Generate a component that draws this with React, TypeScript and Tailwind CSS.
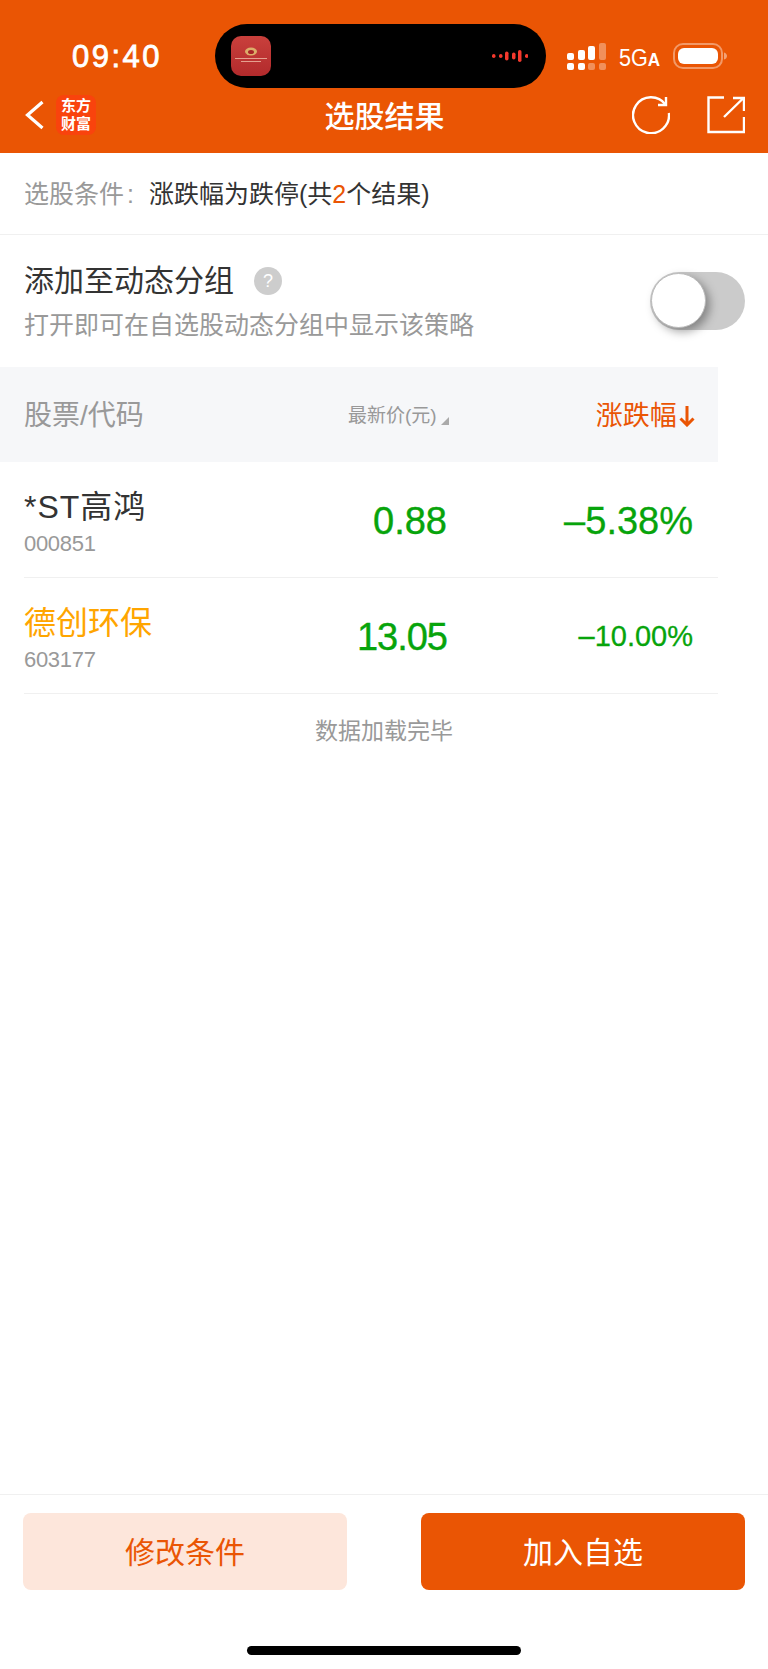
import React from "react";

const sans = "font-['Liberation_Sans','Noto_Sans_CJK_SC',sans-serif]";

function SignalIcon() {
  return (
    <svg width="40" height="28" viewBox="0 0 40 28" fill="#fff">
      <rect x="0" y="10" width="7" height="7" rx="2" />
      <rect x="0" y="20" width="7" height="7" rx="2" />
      <rect x="11" y="7" width="7" height="10" rx="2" />
      <rect x="11" y="20" width="7" height="7" rx="2" />
      <rect x="21" y="3" width="7" height="14" rx="2" />
      <rect x="21" y="20" width="7" height="7" rx="2" opacity="0.35" />
      <rect x="32" y="0" width="7" height="17" rx="2" opacity="0.35" />
      <rect x="32" y="20" width="7" height="7" rx="2" opacity="0.35" />
    </svg>
  );
}

function Battery() {
  return (
    <svg width="55" height="26" viewBox="0 0 55 26">
      <rect x="1" y="1" width="48" height="24" rx="9" fill="none" stroke="#fff" strokeOpacity="0.4" strokeWidth="2" />
      <rect x="5" y="5" width="40" height="16" rx="6" fill="#fff" />
      <path d="M51 9.500c2 .5 3 2 3 3.500s-1 3-3 3.500z" fill="#fff" fillOpacity="0.45" />
    </svg>
  );
}

function Waveform() {
  const bars = [
    [0, 4], [7, 4], [13, 9], [20, 7], [26, 12], [33, 4],
  ];
  return (
    <svg width="36" height="14" viewBox="0 0 36 14" fill="#f4392d">
      {bars.map(([x, h]) => (
        <rect key={x} x={x} y={7 - h / 2} width="3.500" height={h} rx="1.750" />
      ))}
    </svg>
  );
}

function Thumbnail() {
  return (
    <div className="w-10 h-10 rounded-[10px] bg-linear-to-b from-[#c9403c] to-[#b22a2c] flex flex-col items-center justify-center gap-[2px]">
      <svg width="14" height="9" viewBox="0 0 14 9" className="-mt-1">
        <ellipse cx="7" cy="4.500" rx="6" ry="4" fill="#dcae6a" />
        <ellipse cx="7" cy="5" rx="3" ry="2" fill="#a92327" />
      </svg>
      <div className="w-8 h-[1px] bg-[#e5a08f]" />
      <div className="w-5 h-[1px] bg-[#e5a08f]" />
    </div>
  );
}

function StatusBar() {
  return (
    <div className="h-[64px] mt-6 flex items-center">
      <span className="ml-[72px] w-[143px] mt-[1px] text-[31px] leading-none tracking-[2.500px] [-webkit-text-stroke:0.8px_#fff] text-white font-['Liberation_Sans',sans-serif]">
        09:40
      </span>
      <div className="w-[331px] h-[64px] bg-black rounded-[32px] flex items-center justify-between pl-4 pr-[18px]">
        <Thumbnail />
        <Waveform />
      </div>
      <div className="ml-[21px] mt-[1px]">
        <SignalIcon />
      </div>
      <span className="ml-3 mt-[4px] text-white text-[24px] leading-none font-['Liberation_Sans',sans-serif] scale-x-90 origin-left w-[42px] whitespace-nowrap">
        5G<span className="text-[19px] font-bold">A</span>
      </span>
      <div className="ml-3">
        <Battery />
      </div>
    </div>
  );
}

function NavBar() {
  return (
    <div className="h-[65px] pb-[14px] grid grid-cols-[1fr_auto_1fr] items-center pl-6 pr-[23px]">
      <div className="flex items-center mt-[2px]">
        <svg width="20" height="30" viewBox="0 0 20 30" fill="none" stroke="#fff" strokeWidth="3.200">
          <path d="M18.500 2 3.500 15 18.500 28" />
        </svg>
        <div className={`ml-3 w-10 h-10 rounded-lg bg-[#f9430d] flex items-center justify-center text-center text-white text-[15px] leading-[18px] font-bold ${sans}`}>
          <div>
            东方
            <br />
            财富
          </div>
        </div>
      </div>
      <div className="text-white text-[30px] leading-none font-medium font-['Noto_Sans_CJK_SC',sans-serif]">选股结果</div>
      <div className="flex items-center justify-end gap-[37px] mt-[3px]">
        <svg width="38" height="38" viewBox="0 0 38 38" fill="none" stroke="#fff" strokeWidth="2.400">
          <path d="M33.500 8.500A18 18 0 1 0 36.900 17" />
          <path d="M34 1v8h-8" />
        </svg>
        <svg width="38" height="38" viewBox="0 0 38 38" fill="none" stroke="#fff" strokeWidth="2.400">
          <path d="M17 1.500H1.500V36H37V21" />
          <path d="M17 21 36.500 2M26 2h11v13" />
        </svg>
      </div>
    </div>
  );
}

function StockRow({
  name,
  code,
  price,
  change,
  nameClass,
  priceClass,
  changeClass,
}: {
  name: string;
  code: string;
  price: string;
  change: string;
  nameClass: string;
  priceClass?: string;
  changeClass: string;
}) {
  return (
    <div className="ml-6 w-[694px] h-[116px] pt-[2px] border-b border-[#f0f0f0] flex items-center">
      <div className="w-[250px] mt-[1px]">
        <div className={`leading-[44px] ${nameClass}`}>{name}</div>
        <div className="text-[22px] leading-[29px] tracking-[-0.3px] text-[#999]">{code}</div>
      </div>
      <div className={`w-[173px] text-right text-[38px] leading-none text-[#07a40b] [-webkit-text-stroke:0.4px_#07a40b] ${priceClass ?? ""}`}>
        {price}
      </div>
      <div className={`flex-1 text-right pr-[25px] leading-none text-[#07a40b] [-webkit-text-stroke:0.3px_#07a40b] ${changeClass}`}>{change}</div>
    </div>
  );
}

export default function App() {
  return (
    <div className={`w-[768px] h-[1669px] bg-white flex flex-col ${sans}`}>
      {/* header */}
      <div className="bg-[#ea5504] h-[153px]">
        <StatusBar />
        <NavBar />
      </div>

      {/* condition */}
      <div className="h-[82px] pt-[2px] border-b border-[#f0f0f0] flex items-center pl-6 text-[25px]">
        <span className="w-[125px] text-[#999]">
          选股条件<span className="ml-[3px]">:</span>
        </span>
        <span className="text-[#333]">
          涨跌幅为跌停(共<span className="text-[#ea5504]">2</span>个结果)
        </span>
      </div>

      {/* dynamic group switch */}
      <div className="h-[132px] pl-6 pr-[23px] flex items-center justify-between">
        <div className="mt-[2px]">
          <div className="flex items-center">
            <span className="text-[30px] leading-[44px] text-[#333]">添加至动态分组</span>
            <span className="ml-5 w-7 h-7 rounded-full bg-[#cdcdcd] text-white text-[18px] leading-7 text-center">?</span>
          </div>
          <div className="mt-[2px] text-[25px] leading-[40px] text-[#999]">打开即可在自选股动态分组中显示该策略</div>
        </div>
        <div className="relative w-[95px] h-[58px] rounded-full bg-[#cbcbcb]">
          <div className="absolute left-[1px] top-[1px] w-[55px] h-[55px] rounded-full bg-white border border-[#bbb] shadow-[4px_4px_10px_rgba(0,0,0,0.35)]" />
        </div>
      </div>

      {/* table head */}
      <div className="w-[718px] h-[95px] pt-[3px] bg-[#f6f7f9] flex items-center pl-6">
        <span className="w-[324px] text-[28px] text-[#999]">股票/代码</span>
        <span className="text-[19px] text-[#999]">最新价(元)</span>
        <span className="ml-[4px] mt-[10px] w-0 h-0 border-l-[8px] border-l-transparent border-b-[8px] border-b-[#aaa]" />
        <span className="ml-[147px] text-[27px] text-[#ea5504] whitespace-nowrap">涨跌幅</span>
        <svg width="18" height="22" viewBox="0 0 18 22" fill="none" stroke="#ea5504" strokeWidth="3" className="ml-[1px]">
          <path d="M9 1v19M2.500 13.500 9 20l6.500-6.500" />
        </svg>
      </div>

      <StockRow
        name="*ST高鸿"
        code="000851"
        price="0.88"
        change="–5.38%"
        nameClass="text-[32px] tracking-[1px] text-[#333]"
        changeClass="text-[38px]"
      />
      <StockRow
        name="德创环保"
        code="603177"
        price="13.05"
        change="–10.00%"
        nameClass="text-[32px] text-[#ffa500]"
        priceClass="tracking-[-1px]"
        changeClass="text-[29px]"
      />

      <div className="mt-[21px] text-center text-[23px] leading-8 text-[#999]">数据加载完毕</div>

      <div className="flex-1" />

      {/* footer */}
      <div className="h-[175px] border-t border-[#f0f0f0] pt-[18px] px-[23px] flex flex-col">
        <div className="flex justify-between">
          <button className="w-[324px] h-[77px] pt-[2px] rounded-lg bg-[#fde6db] text-[#ea5504] text-[30px]">修改条件</button>
          <button className="w-[324px] h-[77px] pt-[2px] rounded-lg bg-[#ea5504] text-white text-[30px]">加入自选</button>
        </div>
        <div className="mt-[56px] mx-auto w-[274px] h-[9px] rounded-full bg-black" />
      </div>
    </div>
  );
}
